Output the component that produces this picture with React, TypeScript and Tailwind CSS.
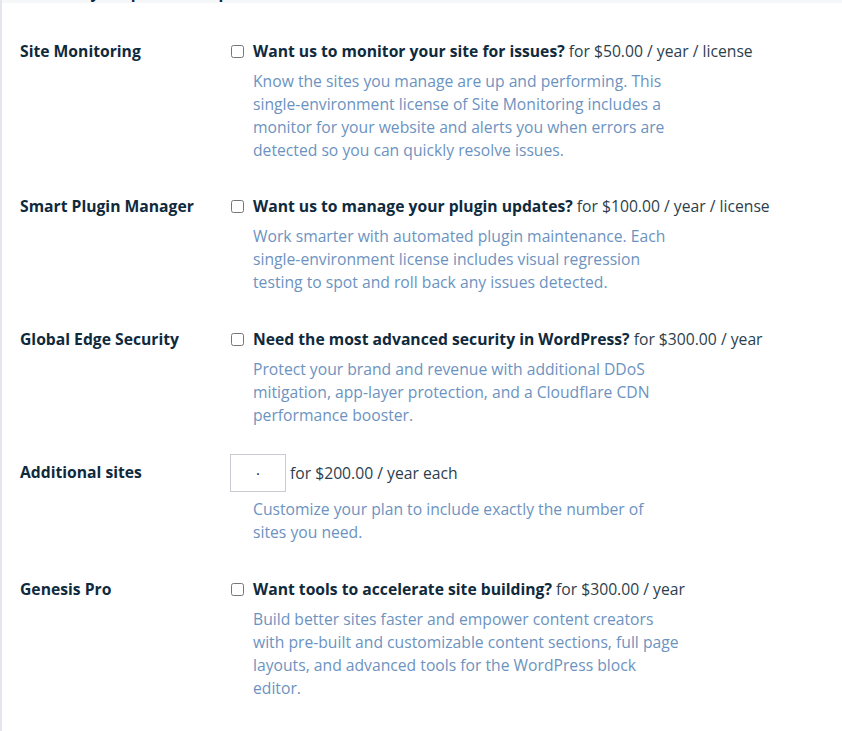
import React from "react";

type Row = {
  label: string;
  question?: string;
  price: string;
  desc: string;
  input?: boolean;
};

const rows: Row[] = [
  {
    label: "Site Monitoring",
    question: "Want us to monitor your site for issues?",
    price: "for $50.00 / year / license",
    desc: "Know the sites you manage are up and performing. This single-environment license of Site Monitoring includes a monitor for your website and alerts you when errors are detected so you can quickly resolve issues.",
  },
  {
    label: "Smart Plugin Manager",
    question: "Want us to manage your plugin updates?",
    price: "for $100.00 / year / license",
    desc: "Work smarter with automated plugin maintenance. Each single-environment license includes visual regression testing to spot and roll back any issues detected.",
  },
  {
    label: "Global Edge Security",
    question: "Need the most advanced security in WordPress?",
    price: "for $300.00 / year",
    desc: "Protect your brand and revenue with additional DDoS mitigation, app-layer protection, and a Cloudflare CDN performance booster.",
  },
  {
    label: "Additional sites",
    price: "for $200.00 / year each",
    desc: "Customize your plan to include exactly the number of sites you need.",
    input: true,
  },
  {
    label: "Genesis Pro",
    question: "Want tools to accelerate site building?",
    price: "for $300.00 / year",
    desc: "Build better sites faster and empower content creators with pre-built and customizable content sections, full page layouts, and advanced tools for the WordPress block editor.",
  },
];

export default function App() {
  return (
    <div
      className="min-h-[731px] w-[842px] bg-white border-l-2 border-[#e3e6ea] overflow-hidden"
      style={{ fontFamily: '"Open Sans", sans-serif' }}
    >
      <div className="h-[3px] overflow-hidden bg-[#f5f7f9] relative">
        <div className="absolute left-[18px] bottom-[0px] translate-y-[1px] text-[15.7px] font-bold leading-[23px] text-[#0f2a3d] whitespace-nowrap">
          Enhance your plan with optional add-ons
        </div>
      </div>
      <div className="pt-[37px]">
        {rows.map((r, i) => (
          <div
            key={r.label}
            className={`flex pl-[18px] ${i === 0 ? "pb-[33px]" : "pb-[34px]"}`}
          >
            <div className="w-[211px] shrink-0 text-[15.7px] font-bold leading-[23px] text-[#0f2a3d]">
              {r.label}
            </div>
            <div className="flex-1">
              {r.input ? (
                <div className="flex items-center -mt-[7px]">
                  <div className="-ml-[1px] w-[56px] h-[38px] border border-[#c8ccd0] flex items-center justify-center text-[#0f2a3d] text-[15px] leading-none">
                    ·
                  </div>
                  <span className="ml-[4px] text-[15.7px] leading-[23px] text-[#2c3e4c]">
                    {r.price}
                  </span>
                </div>
              ) : (
                <div className="flex items-center">
                  <input
                    type="checkbox"
                    className="w-[13px] h-[13px] m-0 mr-[9px] shrink-0"
                  />
                  <span className="text-[15.7px] leading-[23px] text-[#2c3e4c]">
                    <span className="font-bold text-[#0f2a3d]">{r.question}</span>{" "}
                    {r.price}
                  </span>
                </div>
              )}
              <p
                className={`${r.input ? "mt-[6px] w-[420px]" : "mt-[7px] w-[428px]"} ml-[22px] text-[15.7px] leading-[23px] text-[#6c93bf]`}
              >
                {r.desc}
              </p>
            </div>
          </div>
        ))}
      </div>
    </div>
  );
}
